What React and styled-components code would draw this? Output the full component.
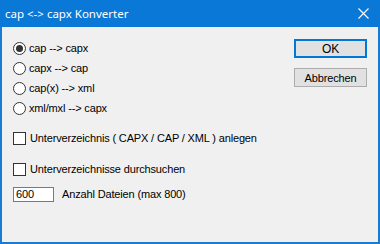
import React from 'react';
import styled, { createGlobalStyle } from 'styled-components';

const GlobalStyle = createGlobalStyle`
  html, body {
    margin: 0;
    padding: 0;
    background: #f0f0f0;
  }
  * { box-sizing: border-box; }
`;

const Window = styled.div`
  width: 380px;
  height: 244px;
  display: flex;
  flex-direction: column;
  background: #f0f0f0;
  border: 2px solid #1b7bd3;
  border-top: none;
  font-family: "Liberation Sans", Arial, sans-serif;
  font-size: 11px;
  letter-spacing: -0.15px;
  color: #000;
`;

const TitleBar = styled.div`
  height: 27px;
  margin: 0 -2px;
  padding: 0 11px 0 5px;
  display: flex;
  align-items: center;
  justify-content: space-between;
  background: #0a78d7;
  color: #fff;
  font-family: "Noto Sans", "Open Sans", sans-serif;
  font-size: 11.5px;
  letter-spacing: 0;
`;

const CloseIcon = () => (
  <svg width="11" height="11" viewBox="0 0 11 11">
    <path d="M0.5 0.5 L10.5 10.5 M10.5 0.5 L0.5 10.5" stroke="#fff" strokeWidth="1.1" fill="none" />
  </svg>
);

const Body = styled.div`
  flex: 1;
  display: flex;
  justify-content: space-between;
  padding: 11px 11px 0 11px;
`;

const Options = styled.div`
  display: flex;
  flex-direction: column;
`;

const Row = styled.label`
  height: 20px;
  display: flex;
  align-items: center;
  margin-top: ${p => p.$gap || 0}px;
`;

const RadioCircle = styled.span`
  width: 13px;
  height: 13px;
  border-radius: 50%;
  border: 1px solid #333;
  background: #fff;
  display: flex;
  align-items: center;
  justify-content: center;
  margin-right: 3px;
  &::after {
    content: '';
    width: 7px;
    height: 7px;
    border-radius: 50%;
    background: ${p => (p.$checked ? '#333' : 'transparent')};
  }
`;

const CheckBox = styled.span`
  width: 13px;
  height: 13px;
  border: 1px solid #333;
  background: #fff;
  margin-right: 4px;
`;

const NumberBox = styled.span`
  width: 41px;
  height: 15px;
  border: 1px solid #7a7a7a;
  background: #fff;
  padding-left: 2px;
  display: flex;
  align-items: center;
  margin-right: 8px;
`;

const Buttons = styled.div`
  display: flex;
  flex-direction: column;
  gap: 10px;
  padding-top: 1px;
`;

const Button = styled.div`
  width: 73px;
  height: 19px;
  display: flex;
  align-items: center;
  justify-content: center;
  background: #e1e1e1;
  border: ${p => (p.$default ? '2px solid #0078d7' : '1px solid #adadad')};
  font-size: ${p => (p.$default ? '12px' : '11px')};
`;

function Radio(props) {
  return <Row $gap={props.gap}>
    <RadioCircle $checked={props.checked} />
    {props.label}
  </Row>;
}

function Check(props) {
  return <Row $gap={props.gap}>
    <CheckBox />
    {props.label}
  </Row>;
}

export default function App() {
  return <>
    <GlobalStyle />
    <Window>
      <TitleBar>
        <span>cap &lt;-&gt; capx Konverter</span>
        <CloseIcon />
      </TitleBar>
      <Body>
        <Options>
          <Radio checked label="cap --> capx" />
          <Radio label="capx --> cap" />
          <Radio label="cap(x) --> xml" />
          <Radio label="xml/mxl --> capx" />
          <Check gap={10} label="Unterverzeichnis ( CAPX / CAP / XML ) anlegen" />
          <Check gap={11} label="Unterverzeichnisse durchsuchen" />
          <Row $gap={5}>
            <NumberBox>600</NumberBox>
            Anzahl Dateien (max 800)
          </Row>
        </Options>
        <Buttons>
          <Button $default>OK</Button>
          <Button>Abbrechen</Button>
        </Buttons>
      </Body>
    </Window>
  </>;
}
